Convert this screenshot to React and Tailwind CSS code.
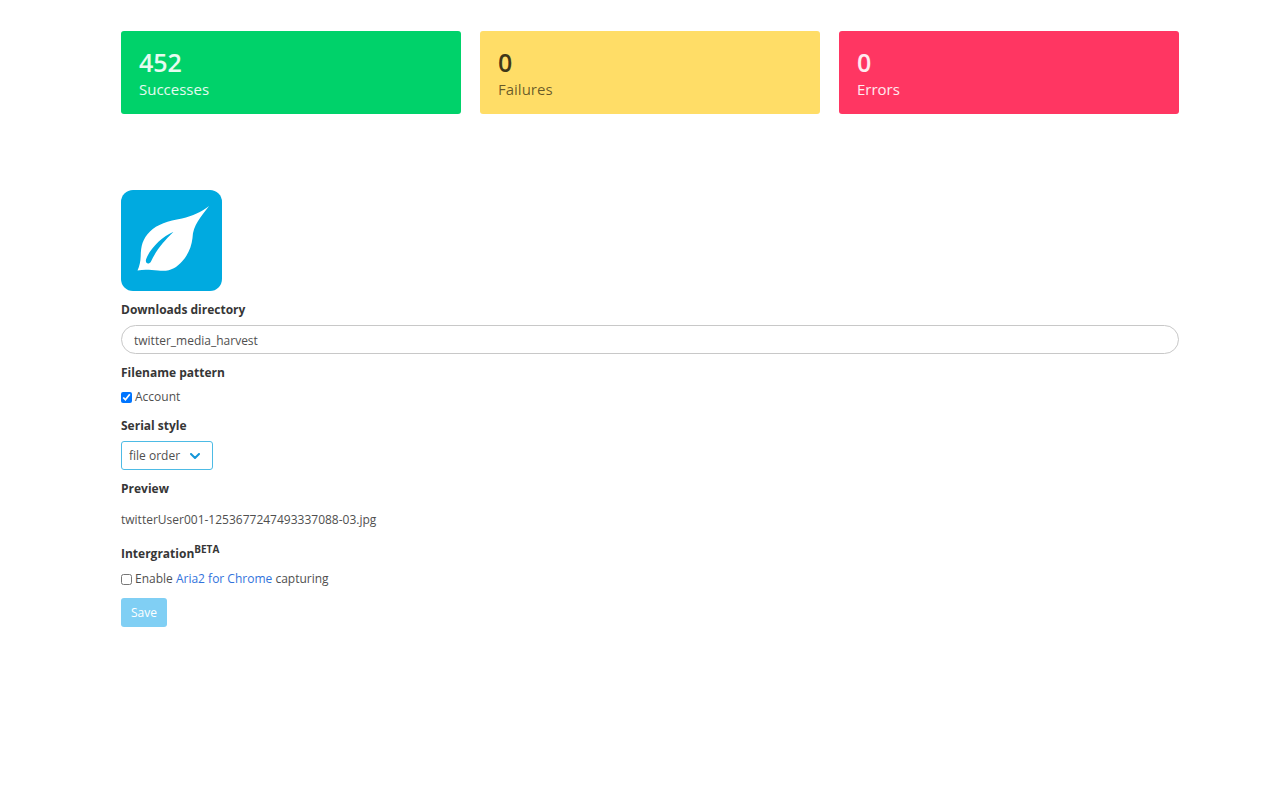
import { useState } from "react";

const stats = [
    { label: "Successes", value: 452, box: "bg-[#00d26a]", number: "text-white/90", text: "text-white/90" },
    { label: "Failures", value: 0, box: "bg-[#ffdd67]", number: "text-black/75", text: "text-black/60" },
    { label: "Errors", value: 0, box: "bg-[#ff3662]", number: "text-white/90", text: "text-white/90" },
];

function LeafLogo() {
    return (
        <svg viewBox="0 0 101 101" className="block w-[101px] h-[101px]" role="img" aria-label="Media Harvest">
            <rect width="101" height="101" rx="12" fill="#00aae0" />
            <path
                d="M88 16C80 22 72 26 61 28.500C47 31 36 34.500 29 41.500C21.500 49 20 56 19.700 66C19.500 72 18.500 76 16.500 80.500C24 79 30 80 37 80.500C49 82 55 78 61 71.500C67 65 70.500 57 71.500 48C72 35 80 27 88 16Z"
                fill="#fff"
            />
            <path
                d="M52.500 41.700C41 47 29 58 25 69.500C24 74 28 75 30 71.500C36 59 43 51 52.500 41.700Z"
                fill="#00aae0"
            />
        </svg>
    );
}

function App() {
    const [directory, setDirectory] = useState("twitter_media_harvest");
    const [account, setAccount] = useState(true);
    const [serial, setSerial] = useState("order");
    const [aria2, setAria2] = useState(false);

    const user = account ? "twitterUser001-" : "";
    const suffix = serial === "order" ? "03" : "EWX1jQ";

    return (
        <main className="pl-[121px] pr-[101px] pt-[31px] pb-8 bg-white font-['Open_Sans','Noto_Sans',sans-serif] text-[12px] leading-5 text-[#4f4f4f]">
            <section className="grid grid-cols-3 gap-[19px]">
                {stats.map((stat) => (
                    <div key={stat.label} className={`rounded-[3px] px-[18px] pt-[15px] pb-[13px] ${stat.box}`}>
                        <p className={`text-[25px] leading-8 font-semibold ${stat.number}`}>{stat.value}</p>
                        <p className={`text-[15px] leading-[23px] ${stat.text}`}>{stat.label}</p>
                    </div>
                ))}
            </section>

            <form className="mt-[76px] flex flex-col gap-[9px]" onSubmit={(e) => e.preventDefault()}>
                <LeafLogo />

                <div>
                    <label htmlFor="directory" className="block mb-[5px] font-bold text-[#363636]">Downloads directory</label>
                    <input
                        id="directory"
                        type="text"
                        value={directory}
                        onChange={(e) => setDirectory(e.target.value)}
                        className="block w-full h-[29px] px-3 pt-px rounded-full border border-[#c8c8c8] bg-white outline-none focus:border-[#00aae0]"
                    />
                </div>

                <fieldset>
                    <legend className="mb-1 font-bold text-[#363636]">Filename pattern</legend>
                    <label className="flex items-center gap-[3px]">
                        <input type="checkbox" checked={account} onChange={(e) => setAccount(e.target.checked)} className="w-[11px] h-[11px]" />
                        Account
                    </label>
                </fieldset>

                <div>
                    <label htmlFor="serial" className="block mb-[5px] font-bold text-[#363636]">Serial style</label>
                    <div className="relative w-[92px]">
                        <select
                            id="serial"
                            value={serial}
                            onChange={(e) => setSerial(e.target.value)}
                            className="block w-full h-[29px] pl-[7px] pr-6 appearance-none rounded-[3px] border border-[#4dbbe5] bg-white outline-none"
                        >
                            <option value="order">file order</option>
                            <option value="name">file name</option>
                        </select>
                        <svg viewBox="0 0 10 6" className="absolute right-[13px] top-[12px] w-[10px] h-[6px] pointer-events-none" fill="none" stroke="#1496d8" strokeWidth="2" strokeLinecap="round" strokeLinejoin="round">
                            <path d="M1 1l4 4 4-4" />
                        </svg>
                    </div>
                </div>

                <div>
                    <h2 className="mb-[5px] font-bold text-[#363636]">Preview</h2>
                    <p className="pt-[6px] pb-[5px]">{user}1253677247493337088-{suffix}.jpg</p>
                </div>

                <div>
                    <h2 className="mb-[5px] font-bold text-[#363636]">
                        Intergration<sup className="text-[10px]">BETA</sup>
                    </h2>
                    <div className="flex items-center gap-[3px]">
                        <input id="aria2" type="checkbox" checked={aria2} onChange={(e) => setAria2(e.target.checked)} className="w-[11px] h-[11px]" />
                        <label htmlFor="aria2">
                            Enable <a href="#aria2" className="text-[#3273dc] hover:text-[#363636]">Aria2 for Chrome</a> capturing
                        </label>
                    </div>
                </div>

                <button type="submit" className="self-start h-[29px] px-[10px] rounded-[3px] bg-[#80cff4] text-white">
                    Save
                </button>
            </form>
        </main>
    );
}

export default App;
